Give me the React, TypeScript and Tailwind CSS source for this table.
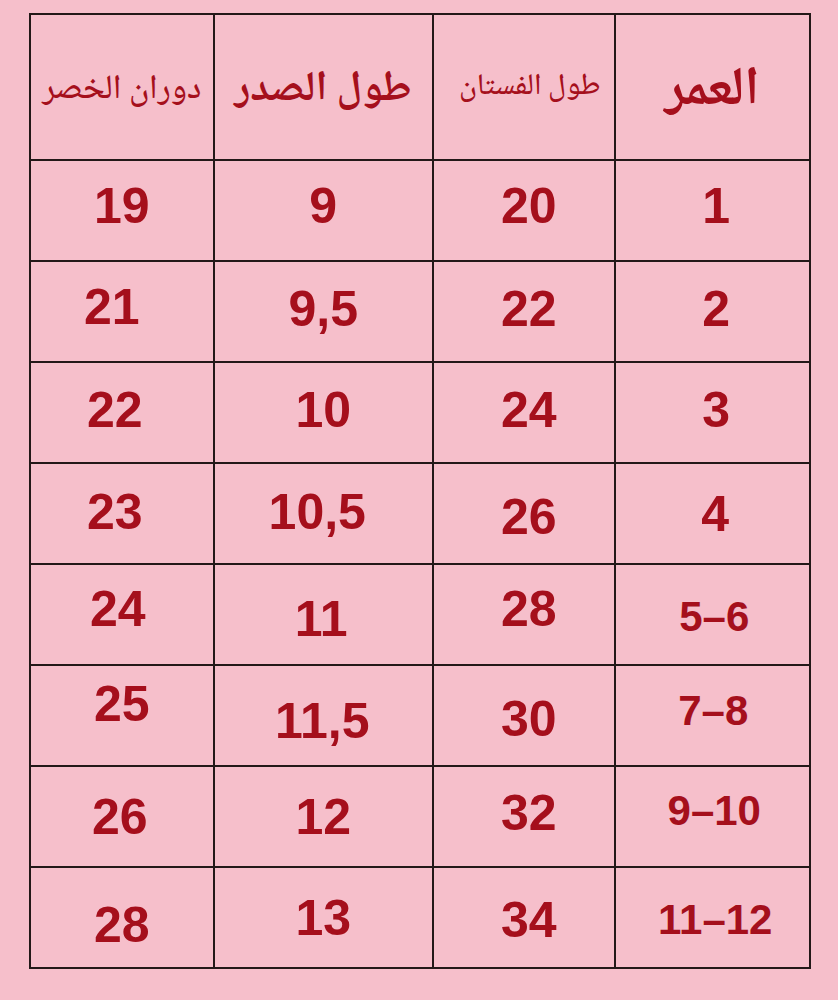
import React from "react";

type Cell = { t: string; cls: string };

const rows: Cell[][] = [
  [
    { t: "19", cls: "-translate-y-[5px]" },
    { t: "9", cls: "-translate-y-[5px]" },
    { t: "20", cls: "translate-x-[5px] -translate-y-[5px]" },
    { t: "1", cls: "translate-x-[4px] -translate-y-[5px]" },
  ],
  [
    { t: "21", cls: "-translate-x-[10px] -translate-y-[5px]" },
    { t: "9,5", cls: "-translate-y-[3px]" },
    { t: "22", cls: "translate-x-[5px] -translate-y-[3px]" },
    { t: "2", cls: "translate-x-[4px] -translate-y-[3px]" },
  ],
  [
    { t: "22", cls: "-translate-x-[7px] -translate-y-[3px]" },
    { t: "10", cls: "-translate-y-[3px]" },
    { t: "24", cls: "translate-x-[5px] -translate-y-[3px]" },
    { t: "3", cls: "translate-x-[4px] -translate-y-[3px]" },
  ],
  [
    { t: "23", cls: "-translate-x-[7px] -translate-y-[2px]" },
    { t: "10,5", cls: "-translate-x-[6px] -translate-y-[2px]" },
    { t: "26", cls: "translate-x-[5px] translate-y-[3px]" },
    { t: "4", cls: "translate-x-[3px]" },
  ],
  [
    { t: "24", cls: "-translate-x-[4px] -translate-y-[6px]" },
    { t: "11", cls: "-translate-x-[2px] translate-y-[4px]" },
    { t: "28", cls: "translate-x-[5px] -translate-y-[6px]" },
    { t: "5–6", cls: "translate-x-[2px] translate-y-[2px]" },
  ],
  [
    { t: "25", cls: "-translate-y-[12px]" },
    { t: "11,5", cls: "-translate-x-[1px] translate-y-[5px]" },
    { t: "30", cls: "translate-x-[5px] translate-y-[3px]" },
    { t: "7–8", cls: "translate-x-[1px] -translate-y-[5px]" },
  ],
  [
    { t: "26", cls: "-translate-x-[2px]" },
    { t: "12", cls: "" },
    { t: "32", cls: "translate-x-[5px] -translate-y-[4px]" },
    { t: "9–10", cls: "translate-x-[2px] -translate-y-[6px]" },
  ],
  [
    { t: "28", cls: "translate-y-[7px]" },
    { t: "13", cls: "" },
    { t: "34", cls: "translate-x-[5px] translate-y-[2px]" },
    { t: "11–12", cls: "translate-x-[3px] translate-y-[2px]" },
  ],
];

const colW = ["w-[184px]", "w-[220px]", "w-[182px]", "w-[194px]"];

export default function App() {
  return (
    <div className="min-h-[1000px] w-[838px] bg-[#f6bfcb] pt-[13px] pl-[29px]">
      <div className="w-[782px] border-2 border-[#231818] text-[#a50f1c]">
        {/* header */}
        <div className="flex h-[146px] border-b-2 border-[#231818]">
          <div
            className={`${colW[0]} flex items-center justify-center border-r-2 border-[#231818] pt-[8px]`}
          >
            <span
              dir="rtl"
              className="text-[34px] font-medium leading-none [font-family:'Noto_Naskh_Arabic','Noto_Sans_Arabic','DejaVu_Sans',serif]"
            >
              دوران الخصر
            </span>
          </div>
          <div
            className={`${colW[1]} flex items-center justify-center border-r-2 border-[#231818] pt-[8px]`}
          >
            <span
              dir="rtl"
              className="text-[42px] font-bold leading-none [font-family:'Noto_Naskh_Arabic','Noto_Sans_Arabic','DejaVu_Sans',serif]"
            >
              طول الصدر
            </span>
          </div>
          <div
            className={`${colW[2]} flex items-center justify-center border-r-2 border-[#231818] pt-[2px] pl-[12px]`}
          >
            <span
              dir="rtl"
              className="text-[30px] font-medium leading-none [font-family:'Noto_Naskh_Arabic','Noto_Sans_Arabic','DejaVu_Sans',serif]"
            >
              طول الفستان
            </span>
          </div>
          <div className={`${colW[3]} flex items-center justify-center pt-[10px]`}>
            <span
              dir="rtl"
              className="text-[54px] font-bold leading-none [font-family:'Noto_Naskh_Arabic','Noto_Sans_Arabic','DejaVu_Sans',serif]"
            >
              العمر
            </span>
          </div>
        </div>
        {rows.map((row, ri) => (
          <div
            key={ri}
            className={`flex ${
              ri === rows.length - 1 ? "h-[99px]" : "h-[101px] border-b-2 border-[#231818]"
            }`}
          >
            {row.map((c, ci) => (
              <div
                key={ci}
                className={`${colW[ci]} flex items-center justify-center ${
                  ci < 3 ? "border-r-2 border-[#231818]" : ""
                }`}
              >
                <span
                  className={`${c.cls} font-bold leading-none [font-family:'Liberation_Sans',Arial,sans-serif] ${
                    ci === 3 && c.t.includes("–") ? "text-[42px]" : "text-[50px]"
                  }`}
                >
                  {c.t}
                </span>
              </div>
            ))}
          </div>
        ))}
      </div>
    </div>
  );
}
